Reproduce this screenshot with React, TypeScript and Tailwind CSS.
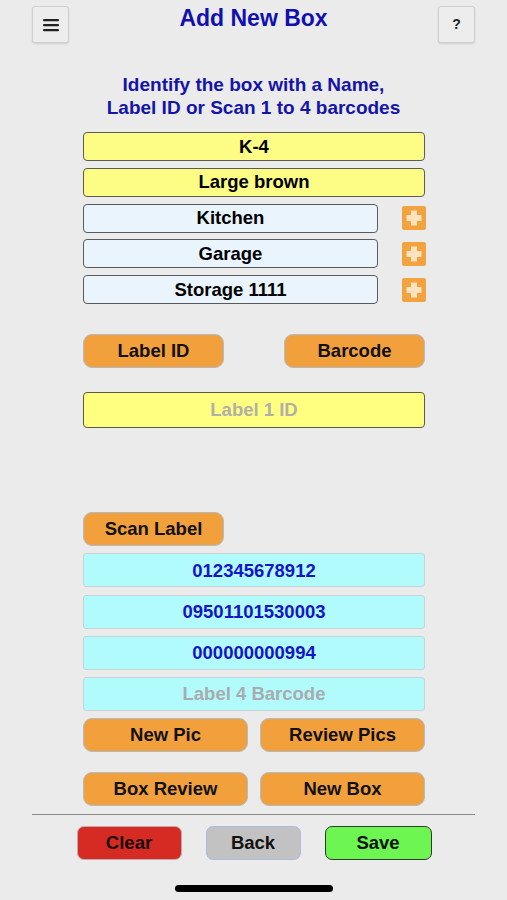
import React from "react";

const font = { fontFamily: '"Liberation Sans", Arial, sans-serif' };

function PlusIcon() {
  return (
    <div className="w-[24px] h-[24px] rounded-[2px] bg-[#f2a23e] flex items-center justify-center">
      <svg width="18" height="18" viewBox="0 0 18 18">
        <rect x="6" y="1.5" width="6" height="15" fill="#fce2bf" />
        <rect x="1.5" y="6" width="15" height="6" fill="#fce2bf" />
      </svg>
    </div>
  );
}

function Field({ text, bg, className = "" }: { text: string; bg: string; className?: string }) {
  return (
    <div
      className={`h-[29px] rounded-[4px] border-[1.5px] border-[#5a5a5a] flex items-center justify-center text-[18.5px] font-bold text-black ${bg} ${className}`}
    >
      {text}
    </div>
  );
}

function OrangeBtn({ text, className = "" }: { text: string; className?: string }) {
  return (
    <div
      className={`h-[34px] rounded-[9px] bg-[#f2a03c] border border-[#aebccb] flex items-center justify-center text-[18.5px] font-bold text-[#111] ${className}`}
    >
      {text}
    </div>
  );
}

function Barcode({ text, placeholder }: { text: string; placeholder?: boolean }) {
  return (
    <div
      className={`h-[34px] rounded-[3px] bg-[#b2fbfd] border border-[#c9d3d6] flex items-center justify-center text-[18.5px] font-bold ${
        placeholder ? "text-[#a9acae]" : "text-[#1515c8]"
      }`}
    >
      {text}
    </div>
  );
}

export default function App() {
  return (
    <div style={font} className="w-[507px] h-[900px] bg-[#ebebeb] flex flex-col relative overflow-hidden">
      {/* Header */}
      <div className="flex items-start justify-between px-[32px] pt-[6px]">
        <div className="w-[37px] h-[37px] rounded-[3px] border border-[#cfcfcf] bg-[#ededed] shadow-[0_1px_2px_rgba(0,0,0,0.12)] flex items-center justify-center">
          <svg width="18" height="14" viewBox="0 0 18 14">
            <rect x="1" y="1" width="16" height="2.2" rx="1" fill="#222" />
            <rect x="1" y="6" width="16" height="2.2" rx="1" fill="#222" />
            <rect x="1" y="11" width="16" height="2.2" rx="1" fill="#222" />
          </svg>
        </div>
        <div className="text-[23px] leading-[24px] font-bold text-[#1010b0]">Add New Box</div>
        <div className="w-[37px] h-[37px] rounded-[3px] border border-[#cfcfcf] bg-[#ededed] shadow-[0_1px_2px_rgba(0,0,0,0.12)] flex items-center justify-center text-[14px] font-bold text-[#222]">
          ?
        </div>
      </div>

      {/* Subtitle */}
      <div className="mt-[30px] text-center text-[19px] leading-[23px] font-bold text-[#1414a8]">
        <div>Identify the box with a Name,</div>
        <div>Label ID or Scan 1 to 4 barcodes</div>
      </div>

      {/* Name fields */}
      <div className="mt-[13px] ml-[83px] w-[343px] flex flex-col gap-[6.8px]">
        <Field text="K-4" bg="bg-[#fdfd86]" className="w-[342px]" />
        <Field text="Large brown" bg="bg-[#fdfd86]" className="w-[342px]" />
        {["Kitchen", "Garage", "Storage 1111"].map((t) => (
          <div key={t} className="flex items-center justify-between">
            <Field text={t} bg="bg-[#eaf4fc]" className="w-[295px]" />
            <PlusIcon />
          </div>
        ))}
      </div>

      {/* Label ID / Barcode */}
      <div className="mt-[30px] ml-[83px] w-[342px] flex justify-between">
        <OrangeBtn text="Label ID" className="w-[141px]" />
        <OrangeBtn text="Barcode" className="w-[141px]" />
      </div>

      <div className="mt-[24px] ml-[83px] w-[342px] h-[36px] rounded-[4px] border-[1.5px] border-[#5a5a4a] bg-[#ffff80] flex items-center justify-center text-[18.5px] font-bold text-[#b0b0a8]">
        Label 1 ID
      </div>

      {/* Scan section */}
      <div className="mt-[84px] ml-[83px] w-[342px] flex flex-col gap-[7.2px]">
        <OrangeBtn text="Scan Label" className="w-[141px]" />
        <Barcode text="012345678912" />
        <Barcode text="09501101530003" />
        <Barcode text="000000000994" />
        <Barcode text="Label 4 Barcode" placeholder />
        <div className="flex justify-between">
          <OrangeBtn text="New Pic" className="w-[165px]" />
          <OrangeBtn text="Review Pics" className="w-[165px]" />
        </div>
      </div>

      <div className="mt-[19.5px] ml-[83px] w-[342px] flex justify-between">
        <OrangeBtn text="Box Review" className="w-[165px]" />
        <OrangeBtn text="New Box" className="w-[165px]" />
      </div>

      {/* Divider */}
      <div className="mt-[8.5px] mx-[32px] h-px bg-[#8a8a8a]" />

      {/* Bottom buttons */}
      <div className="mt-[10.5px] flex justify-center gap-[24px] pl-[1px]">
        <div className="w-[105px] h-[34px] rounded-[7px] bg-[#d62b22] border border-[#c4a8b0] flex items-center justify-center text-[18.5px] font-bold text-[#1a0a0a]">
          Clear
        </div>
        <div className="w-[95px] h-[34px] rounded-[7px] bg-[#c2c2c2] border border-[#a8bde0] flex items-center justify-center text-[18.5px] font-bold text-[#111]">
          Back
        </div>
        <div className="w-[107px] h-[34px] rounded-[7px] bg-[#6df552] border-[1.5px] border-[#2e3a2e] flex items-center justify-center text-[18.5px] font-bold text-[#111]">
          Save
        </div>
      </div>

      {/* Home indicator */}
      <div className="mt-[25px] mx-auto w-[158px] h-[7px] rounded-full bg-black" />
    </div>
  );
}
